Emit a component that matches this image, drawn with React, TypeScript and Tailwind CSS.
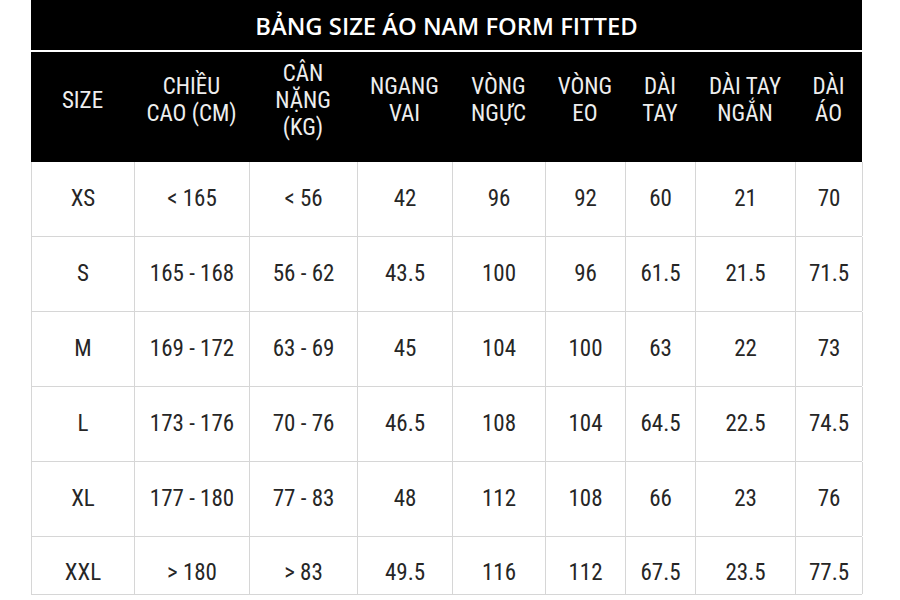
import React from "react";

const cols = ["SIZE", "CHIỀU\nCAO (CM)", "CÂN\nNẶNG\n(KG)", "NGANG\nVAI", "VÒNG\nNGỰC", "VÒNG\nEO", "DÀI\nTAY", "DÀI TAY\nNGẮN", "DÀI\nÁO"];

const rows = [
  ["XS", "< 165", "< 56", "42", "96", "92", "60", "21", "70"],
  ["S", "165 - 168", "56 - 62", "43.5", "100", "96", "61.5", "21.5", "71.5"],
  ["M", "169 - 172", "63 - 69", "45", "104", "100", "63", "22", "73"],
  ["L", "173 - 176", "70 - 76", "46.5", "108", "104", "64.5", "22.5", "74.5"],
  ["XL", "177 - 180", "77 - 83", "48", "112", "108", "66", "23", "76"],
  ["XXL", "> 180", "> 83", "49.5", "116", "112", "67.5", "23.5", "77.5"],
];

const grid = "grid grid-cols-[103px_115px_108px_95px_93px_80px_70px_100px_67px]";
const cond = { fontFamily: "'Roboto Condensed', 'DejaVu Sans Condensed', 'Liberation Sans Narrow', Roboto, sans-serif" };

export default function App() {
  return (
    <div className="w-[900px] h-[600px] bg-white overflow-hidden">
      <div className="ml-[31px] w-[831px]">
        <div
          className="h-[50px] bg-black text-white flex items-center justify-center text-[23.8px] font-semibold pt-[4px]"
          style={{ fontFamily: "'Open Sans', 'Noto Sans', sans-serif" }}
        >
          BẢNG SIZE ÁO NAM FORM FITTED
        </div>
        <div className="h-[2px] bg-white" />
        <div className={`${grid} h-[110px] bg-black text-[#eeeeee]`} style={cond}>
          {cols.map((c, i) => (
            <div key={i} className="flex items-center justify-center text-center text-[23px] leading-[27px] whitespace-pre-line pb-[14px]">
              {c}
            </div>
          ))}
        </div>
        <div className="border-l border-[#d6d6d6]" style={cond}>
          {rows.map((r, ri) => (
            <div key={ri} className={`${grid} ${ri === rows.length - 1 ? "h-[58px]" : "h-[75px]"} border-b border-[#d6d6d6]`}>
              {r.map((v, ci) => (
                <div
                  key={ci}
                  className={`flex items-center justify-center text-[23px] text-[#262626] border-r border-[#d6d6d6] ${ri === rows.length - 1 ? "pt-[16px]" : ""}`}
                >
                  {v}
                </div>
              ))}
            </div>
          ))}
        </div>
      </div>
    </div>
  );
}
